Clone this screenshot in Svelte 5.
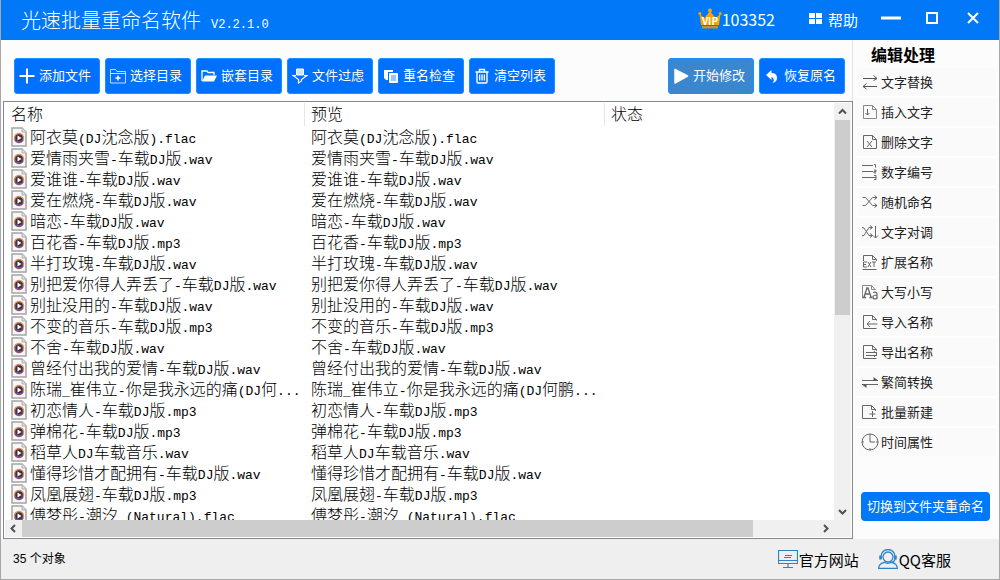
<script lang="ts">
  const tools = [
    { label: '添加文件', icon: 'plus' },
    { label: '选择目录', icon: 'folder' },
    { label: '嵌套目录', icon: 'open' },
    { label: '文件过虑', icon: 'filter' },
    { label: '重名检查', icon: 'copy' },
    { label: '清空列表', icon: 'trash' },
  ];

  const names = [
    '阿衣莫(DJ沈念版).flac',
    '爱情雨夹雪-车载DJ版.wav',
    '爱谁谁-车载DJ版.wav',
    '爱在燃烧-车载DJ版.wav',
    '暗恋-车载DJ版.wav',
    '百花香-车载DJ版.mp3',
    '半打玫瑰-车载DJ版.wav',
    '别把爱你得人弄丢了-车载DJ版.wav',
    '别扯没用的-车载DJ版.wav',
    '不变的音乐-车载DJ版.mp3',
    '不舍-车载DJ版.wav',
    '曾经付出我的爱情-车载DJ版.wav',
    '陈瑞_崔伟立-你是我永远的痛(DJ何...',
    '初恋情人-车载DJ版.mp3',
    '弹棉花-车载DJ版.mp3',
    '稻草人DJ车载音乐.wav',
    '懂得珍惜才配拥有-车载DJ版.wav',
    '凤凰展翅-车载DJ版.mp3',
    '傅梦彤-潮汐 (Natural).flac',
  ];
  const files = names.map((name) => ({ name, preview: name.replace('何...', '何鹏...') }));

  const actions = [
    { label: '文字替换', icon: 'swap' },
    { label: '插入文字', icon: 'insert' },
    { label: '删除文字', icon: 'remove' },
    { label: '数字编号', icon: 'number' },
    { label: '随机命名', icon: 'shuffle' },
    { label: '文字对调', icon: 'exchange' },
    { label: '扩展名称', icon: 'ext' },
    { label: '大写小写', icon: 'case' },
    { label: '导入名称', icon: 'import' },
    { label: '导出名称', icon: 'export' },
    { label: '繁简转换', icon: 'convert' },
    { label: '批量新建', icon: 'create' },
    { label: '时间属性', icon: 'clock' },
  ];

  // Latin runs use a half-width monospace face beside full-width Han text.
  const runs = (text: string) => text.match(/[\x20-\x7e]+|[^\x20-\x7e]+/g) ?? [];
  const isLatin = (text: string) => /^[\x20-\x7e]/.test(text);
</script>

{#snippet mixed(text: string)}
  {#each runs(text) as run}{#if isLatin(run)}<span class="latin">{run}</span>{:else}{run}{/if}{/each}
{/snippet}

{#snippet toolIcon(name: string)}
  <svg class="tool-icon" viewBox="0 0 16 16" fill="none" stroke="#fff" aria-hidden="true">
    {#if name === 'plus'}
      <path d="M8 .5v15M.5 8h15" stroke-width="2" />
    {:else if name === 'folder'}
      <path d="M.5 15V1.5h5l1.5 2h8.500V15zM.5 5.500h15" opacity=".75" />
      <path d="M8 7.500v5M5.500 10h5" stroke-width="1.500" />
    {:else if name === 'open'}
      <path d="M1 13V3h5l1 1.500h6V7" stroke-width="1.300" />
      <path d="M1 13.500 4 7.500h12l-3 6z" fill="#fff" stroke="none" />
    {:else if name === 'filter'}
      <path d="M4.500 1h7v6h-7z" fill="#cfe4ff" />
      <path d="M4 7.500H1l5.500 4V15l3-2v-1.500l5.500-4h-3" stroke-width="1.200" />
    {:else if name === 'copy'}
      <path d="M1 2h9v2H5v8H3L1 10z" fill="#fff" stroke="none" />
      <rect x="6" y="5" width="9" height="10" rx="1" fill="#fff" stroke="none" />
      <path d="M8 8h5M8 10h5M8 12h5" stroke="#3b8cff" />
    {:else}
      <path d="M1.500 4h13M5.500 4V1.500h5V4M3 4.500V14q0 1 1 1h8q1 0 1-1V4.500" stroke-width="1.400" />
      <path d="M5.500 6.500v6M7.200 6.500v6M8.800 6.500v6M10.500 6.500v6" stroke-width="1" />
    {/if}
  </svg>
{/snippet}

{#snippet actionIcon(name: string)}
  <svg class="action-icon" viewBox="0 0 18 18" fill="none" stroke="#666" aria-hidden="true">
    {#if name === 'swap'}
      <path d="M2 5.500h14M12.500 2.500l3.500 3-3.500 2M16 13.500H2M5.500 10.500l-3.500 3 3.500 2.500" stroke="#555" />
    {:else if name === 'insert'}
      <path d="M2.500 2.500h9l4 4v9h-13zM11.500 2.500v4h4" stroke="#888" />
      <path d="M6.500 6v6M4.500 10l2 2 2-2" />
    {:else if name === 'remove'}
      <path d="M2.500 2.500h9l4 4v9h-13zM11.500 2.500v4h4" />
      <path d="M6 8l5 6M11 8l-5 6" />
    {:else if name === 'number'}
      <path d="M1 2.500h11M1 8.500h11M1 14.500h13" />
      <path d="M13 1.500h1.500v3M13 7h2v1.500h-2V10h2M13 12.500h2v4h-2M13 14.500h2" />
    {:else if name === 'shuffle'}
      <path d="M1.500 4.500h3l7 8H16M1.500 12.500h3l7-8H16M13.500 2.500l2.500 2-2.500 2M13.500 10.500l2.500 2-2.500 2" />
    {:else if name === 'exchange'}
      <path d="M1 4.500l2 .5 5 7.500h3M1 12.500h2l5-8h3M9 2.500l2.500 2-2.500 2M9 10.500l2.500 2-2.500 2M14.500 3v12M12 12.500l2.500 2.500 2.500-2.500" />
    {:else if name === 'ext'}
      <path d="M2.500 8V2.500h9l4 4V8M11.500 2.500v4h4M1.500 16.500h14" />
      <path d="M6 9H2.500v5H6M2.500 11.500H5M7 9l3 5M10 9l-3 5M11 9h4M13 9v5" />
    {:else if name === 'case'}
      <path d="M1.500 15.500v-13h9l4 4.500M10.500 2.500v4h4" stroke="#888" />
      <path d="M3 14l3-9h1l3 9M4.500 11h4M2 14.500h3M8.500 14.500h3" stroke-width="1.300" />
      <path d="M12 9.500q4-1 4 1.500v5M16 12q-4 0-4 2t2 2 2-2" stroke-width="1.200" />
    {:else if name === 'import'}
      <path d="M15.500 7.500V6.500l-4-4h-9v13h13M11.500 2.500v4h4M16.500 11H6M9 8l-3 3 3 3" />
    {:else if name === 'export'}
      <path d="M15.500 8V6.500l-4-4h-9v13h13M11.500 2.500v4h4M5 9.500h11M5 12.500h11M13 8l3 3-3 3" />
    {:else if name === 'convert'}
      <path d="M1 7.500h16M1 11.500h16" stroke-width="1.200" />
      <path d="M12.500 4l4.500 3.500h-4.500zM5.500 15 1 11.500h4.500z" fill="#555" stroke="none" />
    {:else if name === 'create'}
      <path d="M14.500 8V6.500l-4-4h-9v13h14M10.500 2.500v4h4M11.500 8v6M8.500 11h6" />
    {:else}
      <circle cx="9" cy="9" r="8" /><path d="M9 1v8h5M1 9h2M15 9h2M9 15v2" />
    {/if}
  </svg>
{/snippet}

<div class="window">
  <header class="titlebar">
    <h1>光速批量重命名软件</h1>
    <span class="version">V2.2.1.0</span>
    <div class="vip">
      <svg width="24" height="22" viewBox="0 0 24 22" aria-hidden="true">
        <path d="M3 17 1.500 6l5 4L12 3l5.500 7 5-4L21 17z" fill="#f5a400" />
        <circle cx="12" cy="2.500" r="2" fill="#f5a400" /><circle cx="1.800" cy="5.500" r="1.500" fill="#f5a400" /><circle cx="22.200" cy="5.500" r="1.500" fill="#f5a400" />
        <path d="M4 18h16v2.500H4z" fill="#b9953c" />
        <text x="12" y="16.500" text-anchor="middle" font-size="10" font-weight="700" fill="#fff">VIP</text>
      </svg>
      <span>103352</span>
    </div>
    <button class="help">
      <svg width="13" height="12" viewBox="0 0 13 12" fill="#fff" aria-hidden="true"><path d="M0 0h6v5H0zM7 0h6v5H7zM0 6h6v5H0zM7 6h6v5H7z" /></svg>
      帮助
    </button>
    <div class="controls">
      <button aria-label="最小化"><svg viewBox="0 0 20 20"><path d="M0 10h20" stroke-width="3" /></svg></button>
      <button aria-label="最大化"><svg viewBox="0 0 20 20"><rect x="5" y="5" width="10" height="10" stroke-width="2" /></svg></button>
      <button aria-label="关闭"><svg viewBox="0 0 20 20"><path d="M5 5l10 10M15 5 5 15" stroke-width="2" /></svg></button>
    </div>
  </header>

  <div class="body">
    <main>
      <div class="toolbar">
        {#each tools as tool}
          <button class="tool">{@render toolIcon(tool.icon)}<span>{tool.label}</span></button>
        {/each}
        <div class="spacer"></div>
        <button class="tool active">
          <svg class="tool-icon" viewBox="0 0 16 16" aria-hidden="true"><path d="M2 1.500 14.500 8 2 15z" fill="#fff" stroke="#fff" stroke-width="1.500" stroke-linejoin="round" /></svg><span>开始修改</span>
        </button>
        <button class="tool">
          <svg class="tool-icon" viewBox="0 0 16 16" aria-hidden="true"><path d="M2 7 7.500 2v3Q13 5 13 10q0 4-4.500 5 2-2.500 1-4.500-.7-1.500-2-1.500v3z" fill="#fff" /></svg><span>恢复原名</span>
        </button>
      </div>

      <div class="list">
        <div class="viewport">
          <table>
            <thead><tr><th>名称</th><th>预览</th><th>状态</th></tr></thead>
            <tbody>
              {#each files as file}
                <tr>
                  <td>
                    <div class="cell">
                      <svg width="16" height="20" viewBox="0 0 16 20" aria-hidden="true">
                        <path d="M1 1h10l4 4v14H1z" fill="#f7f7f7" stroke="#a4a4a4" stroke-width="1.500" />
                        <path d="M11 1v4h4" fill="#ddd" stroke="#b0b0b0" />
                        <circle cx="8" cy="11" r="4.500" fill="#383244" stroke="#e08a58" stroke-width="1.400" />
                        <path d="M4 13a4.500 4.500 0 0 0 8 0" fill="none" stroke="#7b4c9c" stroke-width="1.400" />
                        <path d="M6.500 8.500v5l4-2.500z" fill="#fff" />
                      </svg>
                      <span>{@render mixed(file.name)}</span>
                    </div>
                  </td>
                  <td><div class="cell"><span>{@render mixed(file.preview)}</span></div></td>
                  <td></td>
                </tr>
              {/each}
            </tbody>
          </table>
        </div>
        <div class="bar vertical">
          <button aria-label="向上滚动"><svg viewBox="0 0 9 9"><path d="M1 6.500 4.500 3 8 6.500" /></svg></button>
          <div class="track"><div class="thumb"></div></div>
          <button aria-label="向下滚动"><svg viewBox="0 0 9 9"><path d="M1 3l3.500 3.500L8 3" /></svg></button>
        </div>
        <div class="bar horizontal">
          <button aria-label="向左滚动"><svg viewBox="0 0 9 9"><path d="M6 1 2.500 4.500 6 8" /></svg></button>
          <div class="track"><div class="thumb"></div></div>
          <button aria-label="向右滚动"><svg viewBox="0 0 9 9"><path d="M3 1l3.500 3.500L3 8" /></svg></button>
        </div>
        <div class="corner"></div>
      </div>
    </main>

    <aside>
      <h2>编辑处理</h2>
      <nav>
        {#each actions as action}
          <button>{@render actionIcon(action.icon)}<span>{action.label}</span></button>
        {/each}
      </nav>
      <button class="switch">切换到文件夹重命名</button>
    </aside>
  </div>

  <footer>
    <span class="count">35 个对象</span>
    <a href="#site">
      <svg width="20" height="20" viewBox="0 0 20 20" fill="none" stroke="#2a84c6" aria-hidden="true">
        <path d="M.5 1.500h19v13H.5zM.5 11.500h19M7 6.500h7M6 8.500h7M10 15v3M5 18.500h10" stroke-width="1.200" />
      </svg><span>官方网站</span>
    </a>
    <a href="#qq">
      <svg width="20" height="20" viewBox="0 0 20 20" fill="none" stroke="#2a84c6" stroke-width="1.300" aria-hidden="true">
        <circle cx="10" cy="8" r="5" />
        <path d="M3 10V7.500a7 7 0 0 1 14 0V10M17 10q-1 4-5 3.500M.7 19.300q0-5 6-6 3 2 6.600 0 6 1 6 6z" />
        <path d="M2.500 6.500v4M17.500 6.500v4" stroke-width="2.500" />
      </svg><span>QQ客服</span>
    </a>
  </footer>
</div>

<style>
  :global(body) {
    margin: 0;
  }
  .window {
    box-sizing: border-box;
    height: 100vh;
    display: flex;
    flex-direction: column;
    border: solid #a8a8a8;
    border-width: 0 1px 1px;
    background: #fcfcfc;
    color: #000;
    font-family: 'Noto Sans CJK SC', sans-serif;
  }
  button {
    margin: 0;
    padding: 0;
    border: 0;
    background: none;
    color: inherit;
    font: inherit;
    white-space: nowrap;
  }
  svg {
    flex: none;
  }

  .titlebar {
    flex: none;
    height: 40px;
    display: flex;
    align-items: center;
    padding-right: 16px;
    background: #0078f8;
    color: #fff;
  }
  h1 {
    margin: 0 0 0 20px;
    font-size: 20px;
    font-weight: 300;
    line-height: 40px;
  }
  .version {
    flex: 1;
    padding: 10px 0 0 10px;
    font: 12px 'Liberation Mono', monospace;
  }
  .vip {
    display: flex;
    align-items: center;
    padding-bottom: 2px;
    font-size: 16px;
  }
  .help {
    display: flex;
    align-items: center;
    gap: 6px;
    margin: 0 23px 0 34px;
    padding-bottom: 2px;
    font-size: 15px;
  }
  .controls {
    display: flex;
    gap: 21px;
  }
  .controls button,
  .controls svg {
    display: block;
    width: 20px;
    height: 20px;
  }
  .controls button {
    margin-top: -4px;
  }
  .controls svg {
    fill: none;
    stroke: #fff;
  }

  .body {
    flex: 1;
    min-height: 0;
    display: flex;
  }
  main {
    flex: 1;
    min-width: 0;
    display: flex;
    flex-direction: column;
    padding-left: 2px;
    background: #fcfcfc;
  }
  .toolbar {
    flex: none;
    display: flex;
    gap: 5px;
    padding: 18px 7px 7px 11px;
    border-right: 1px solid #e4e4e4;
  }
  .spacer {
    flex: 1;
  }
  .tool {
    box-sizing: border-box;
    width: 86px;
    height: 36px;
    display: flex;
    align-items: center;
    gap: 4px;
    padding-left: 4px;
    border: 1px solid #1890ff;
    border-radius: 3px;
    background: #0070ff;
    color: #fff;
    font-size: 13px;
  }
  .tool span {
    padding-bottom: 3px;
  }
  .tool.active {
    background: #3a87cf;
  }
  .tool-icon {
    width: 16px;
    height: 16px;
  }

  .list {
    flex: 1;
    min-height: 0;
    display: grid;
    grid-template: minmax(0, 1fr) 17px / minmax(0, 1fr) 17px;
    padding: 1px;
    border: 1px solid #828790;
    background: #fff;
  }
  .viewport {
    overflow: hidden;
  }
  table {
    width: 100%;
    table-layout: fixed;
    border-spacing: 0;
    font-size: 16px;
    line-height: 21px;
  }
  th,
  td {
    height: 21px;
    padding: 0 0 0 6px;
    text-align: left;
    font-weight: 300;
    white-space: nowrap;
  }
  th {
    height: 22px;
    padding-bottom: 2px;
    border-right: 1px solid #e5e5e5;
    box-sizing: border-box;
  }
  th:nth-child(-n + 2) {
    width: 300px;
  }
  th:last-child {
    border-right: 0;
  }
  .cell {
    display: flex;
    align-items: center;
    gap: 3px;
    height: 21px;
  }
  .latin {
    font-family: 'Liberation Mono', monospace;
    font-size: 13px;
    line-height: 1;
    white-space: pre;
  }

  .bar {
    display: flex;
    background: #f0f0f0;
  }
  .vertical {
    flex-direction: column;
  }
  .bar button {
    flex: none;
    width: 17px;
    height: 17px;
    display: grid;
    place-items: center;
  }
  .bar svg {
    width: 9px;
    height: 9px;
    fill: none;
    stroke: #505050;
    stroke-width: 2;
  }
  .track {
    flex: 1;
  }
  .thumb {
    background: #cdcdcd;
  }
  .vertical .thumb {
    height: 51%;
    margin: 0 1px;
  }
  .horizontal .thumb {
    width: 92%;
    height: 100%;
  }
  .corner {
    background: #f0f0f0;
  }

  aside {
    flex: none;
    width: 142px;
    padding: 0 0 0 4px;
    display: flex;
    flex-direction: column;
  }
  h2 {
    margin: 0 0 0 14px;
    font-size: 16px;
    line-height: 28px;
    font-weight: 700;
  }
  nav {
    display: flex;
    flex-direction: column;
    gap: 2px;
    margin-right: 4px;
    background: #fff;
  }
  nav button {
    height: 28px;
    display: flex;
    align-items: center;
    gap: 2px;
    padding-left: 4px;
    background: #fafafa;
    color: #222;
    font-size: 13px;
  }
  nav span {
    padding-bottom: 2px;
  }
  .action-icon {
    width: 18px;
    height: 18px;
  }
  .switch {
    height: 29px;
    margin: 36px 9px 0 4px;
    padding-bottom: 2px;
    border-radius: 4px;
    background: #0078f8;
    color: #fff;
    font-size: 13px;
  }

  footer {
    flex: none;
    height: 40px;
    display: flex;
    align-items: center;
    gap: 19px;
    padding: 0 48px 0 12px;
    background: #efefef;
  }
  .count {
    flex: 1;
    font-family: 'Liberation Sans', 'Noto Sans CJK SC', sans-serif;
    font-size: 12px;
    line-height: 18px;
    word-spacing: normal;
  }
  footer a {
    display: flex;
    align-items: center;
    gap: 1px;
    color: #000;
    font-size: 15px;
    text-decoration: none;
  }
</style>
